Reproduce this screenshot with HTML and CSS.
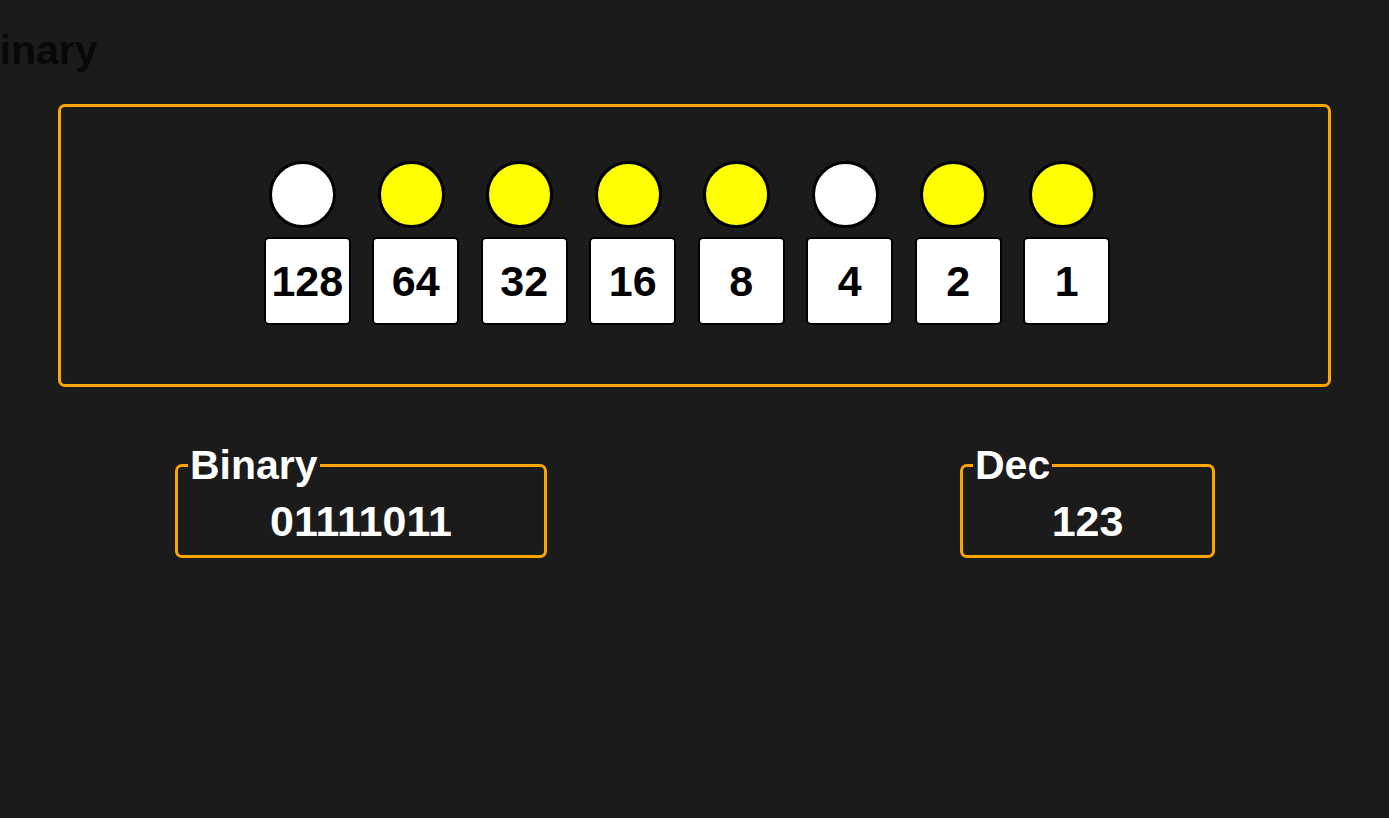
FILE: index.html
```html
<!DOCTYPE html>
<html>
<head>
    <title>Binary</title>
    <link rel="stylesheet" href="styles.css">
</head>
<body>
    <h1 class="title">Binary</h1>
    <div class="board">
        <div class="bits">
            <div class="bit"><div class="lamp"></div><div class="cell">128</div></div>
            <div class="bit"><div class="lamp on"></div><div class="cell">64</div></div>
            <div class="bit"><div class="lamp on"></div><div class="cell">32</div></div>
            <div class="bit"><div class="lamp on"></div><div class="cell">16</div></div>
            <div class="bit"><div class="lamp on"></div><div class="cell">8</div></div>
            <div class="bit"><div class="lamp"></div><div class="cell">4</div></div>
            <div class="bit"><div class="lamp on"></div><div class="cell">2</div></div>
            <div class="bit"><div class="lamp on"></div><div class="cell">1</div></div>
        </div>
    </div>
    <div class="results">
        <fieldset class="result binary">
            <legend>Binary</legend>
            <div class="value">01111011</div>
        </fieldset>
        <fieldset class="result dec">
            <legend>Dec</legend>
            <div class="value">123</div>
        </fieldset>
    </div>
</body>
</html>
```

FILE: styles.css
```css
body {
    font-family: "Liberation Sans", Arial, sans-serif;
    margin: 0;
    background-color: #1b1b1b;
    height: 100vh;
}
.title {
    font-size: 41px;
    color: #080808;
    margin: 27px 0 0 -30px;
}
.board {
    margin: 30px 58px 0;
    border: 3px solid #ffa500;
    border-radius: 7px;
    padding: 54px 15px 59px 0;
    display: flex;
    justify-content: center;
}
.bits {
    display: flex;
    gap: 21.5px;
}
.bit {
    display: flex;
    flex-direction: column;
    align-items: center;
    gap: 9px;
}
.lamp {
    width: 67px;
    height: 67px;
    box-sizing: border-box;
    border: 3px solid #000;
    border-radius: 50%;
    background-color: white;
    margin-right: 9px;
}
.lamp.on {
    background-color: #ffff00;
}
.cell {
    width: 87px;
    height: 88px;
    box-sizing: border-box;
    border: 2px solid #000;
    border-radius: 5px;
    background-color: white;
    display: flex;
    align-items: center;
    justify-content: center;
    font-size: 43px;
    font-weight: bold;
    color: #000;
}
.results {
    display: flex;
    justify-content: space-between;
    padding: 0 174px 0 175px;
    margin-top: 55px;
}
.result {
    margin: 0;
    box-sizing: border-box;
    border: 3px solid #ffa500;
    border-radius: 7px;
    padding: 8px 10px 9px;
    min-width: 0;
}
.result.binary {
    width: 372px;
}
.result.dec {
    width: 255px;
}
.result legend {
    padding: 0 2px;
    font-size: 41px;
    font-weight: bold;
    color: white;
}
.value {
    text-align: center;
    font-size: 43px;
    font-weight: bold;
    color: white;
}
```
